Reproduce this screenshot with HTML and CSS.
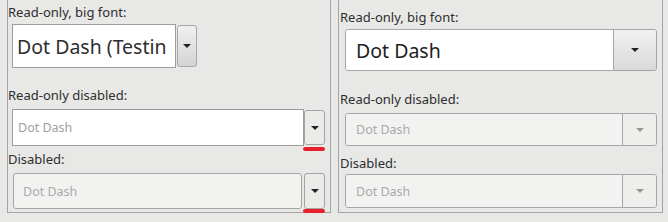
FILE: index.html
```html
<!DOCTYPE html>
<html lang="en">
<head>
    <meta charset="UTF-8">
    <link rel="stylesheet" href="styles.css">
    <title>Combo boxes</title>
</head>
<body>
    <div class="panel left">
        <div class="label first">Read-only, big font:</div>
        <div class="combo big">
            <div class="field">Dot Dash (Testin</div>
            <div class="button"><span class="arrow"></span></div>
        </div>
        <div class="label second">Read-only disabled:</div>
        <div class="combo ro">
            <div class="field">Dot Dash</div>
            <div class="button"><span class="arrow"></span></div>
        </div>
        <div class="mark"></div>
        <div class="label third">Disabled:</div>
        <div class="combo dis">
            <div class="field">Dot Dash</div>
            <div class="button"><span class="arrow"></span></div>
        </div>
        <div class="mark last"></div>
    </div>
    <div class="panel right">
        <div class="label first">Read-only, big font:</div>
        <div class="combo big">
            <div class="field">Dot Dash</div>
            <div class="button"><span class="arrow"></span></div>
        </div>
        <div class="label second">Read-only disabled:</div>
        <div class="combo ro">
            <div class="field">Dot Dash</div>
            <div class="button"><span class="arrow"></span></div>
        </div>
        <div class="label third">Disabled:</div>
        <div class="combo dis">
            <div class="field">Dot Dash</div>
            <div class="button"><span class="arrow"></span></div>
        </div>
    </div>
</body>
</html>
```

FILE: styles.css
```css
body {
    margin: 0;
    background-color: #e8e8e7;
    font-family: "Noto Sans", sans-serif;
    color: #2e2e2e;
    display: flex;
    gap: 7px;
    padding-left: 7px;
    height: 222px;
    box-sizing: border-box;
}

.panel {
    border: 1px solid #a4a4a4;
    border-top: none;
    height: 213px;
    box-sizing: border-box;
}

.left {
    width: 324px;
}

.right {
    width: 325px;
}

.label {
    font-size: 13px;
    line-height: 16px;
    height: 16px;
}

.left .label.first { margin-top: 4px; }
.left .label.second { margin-top: 19px; }
.left .label.third { margin-top: 0; }

.right .label { padding-left: 1px; }
.right .label.first { margin-top: 9px; }
.right .label.second { margin-top: 20px; }
.right .label.third { margin-top: 9px; }

.combo {
    display: flex;
}

.field {
    white-space: nowrap;
    overflow: hidden;
    box-sizing: border-box;
}

.arrow {
    width: 0;
    height: 0;
    border-left: 4px solid transparent;
    border-right: 4px solid transparent;
    border-top: 4px solid #222;
}

/* left side: separate field and button */
.left .combo {
    margin-left: 4px;
}

.left .field {
    background-color: white;
    border: 1px solid #9c9c9c;
    color: #a0a0a0;
    font-size: 12.5px;
    padding-left: 5px;
    display: flex;
    align-items: center;
}

.left .button {
    margin-left: 1px;
    width: 21px;
    box-sizing: border-box;
    border: 1px solid #a3a3a3;
    border-radius: 3px;
    background: linear-gradient(#f3f3f3, #d9d9d9);
    display: flex;
    align-items: center;
    justify-content: center;
}

.left .big {
    margin-top: 4px;
    height: 44px;
}

.left .big .field {
    width: 164px;
    font-size: 19.5px;
    color: #2e2e2e;
    padding-left: 4px;
}

.left .big .button {
    width: 20px;
    margin: 1px 0 1px 1px;
    border-color: #a8a8a8;
    background: linear-gradient(#f0f0f0, #d4d4d4);
}

.left .ro {
    margin-top: 6px;
    height: 37px;
}

.left .ro .field {
    width: 292px;
}

.left .ro .button {
    margin: 1px 0;
    background: #ebebea;
}

.left .dis {
    margin-top: 6px;
    height: 36px;
}

.left .dis .field {
    width: 289px;
    margin-left: 1px;
    background-color: #f2f2f1;
    border-color: #a6a6a6;
    border-radius: 3px;
    padding-left: 9px;
    color: #aaaaaa;
}

.left .dis .button {
    margin-left: 2px;
    background: #ebebea;
}

.mark {
    margin-left: 295px;
    margin-top: 1px;
    width: 22px;
    height: 4px;
    border-radius: 2px;
    background-color: #e8202b;
}

.mark.last {
    margin-top: 0;
}

/* right side: field and button joined in one frame */
.right .combo {
    margin-left: 6px;
    width: 312px;
    border: 1px solid #a6a6a6;
    border-radius: 3px;
    box-sizing: border-box;
    overflow: hidden;
}

.right .field {
    flex: 1;
    display: flex;
    align-items: center;
    padding-left: 10px;
    font-size: 12.5px;
    color: #aaaaaa;
    background-color: #f2f2f1;
}

.right .button {
    border-left: 1px solid #a6a6a6;
    width: 33px;
    display: flex;
    align-items: center;
    justify-content: center;
    background-color: #eeeeed;
}

.right .button .arrow {
    border-top-color: #959595;
}

.right .big {
    margin-top: 4px;
    height: 42px;
}

.right .big .field {
    background-color: white;
    font-size: 19.5px;
    color: #1e1e1e;
}

.right .big .button {
    width: 42px;
    background: linear-gradient(#f2f2f2, #d9d9d9);
}

.right .big .button .arrow {
    border-top-color: #222;
}

.right .ro {
    margin-top: 6px;
    height: 33px;
}

.right .dis {
    margin-top: 3px;
    height: 34px;
}
```
